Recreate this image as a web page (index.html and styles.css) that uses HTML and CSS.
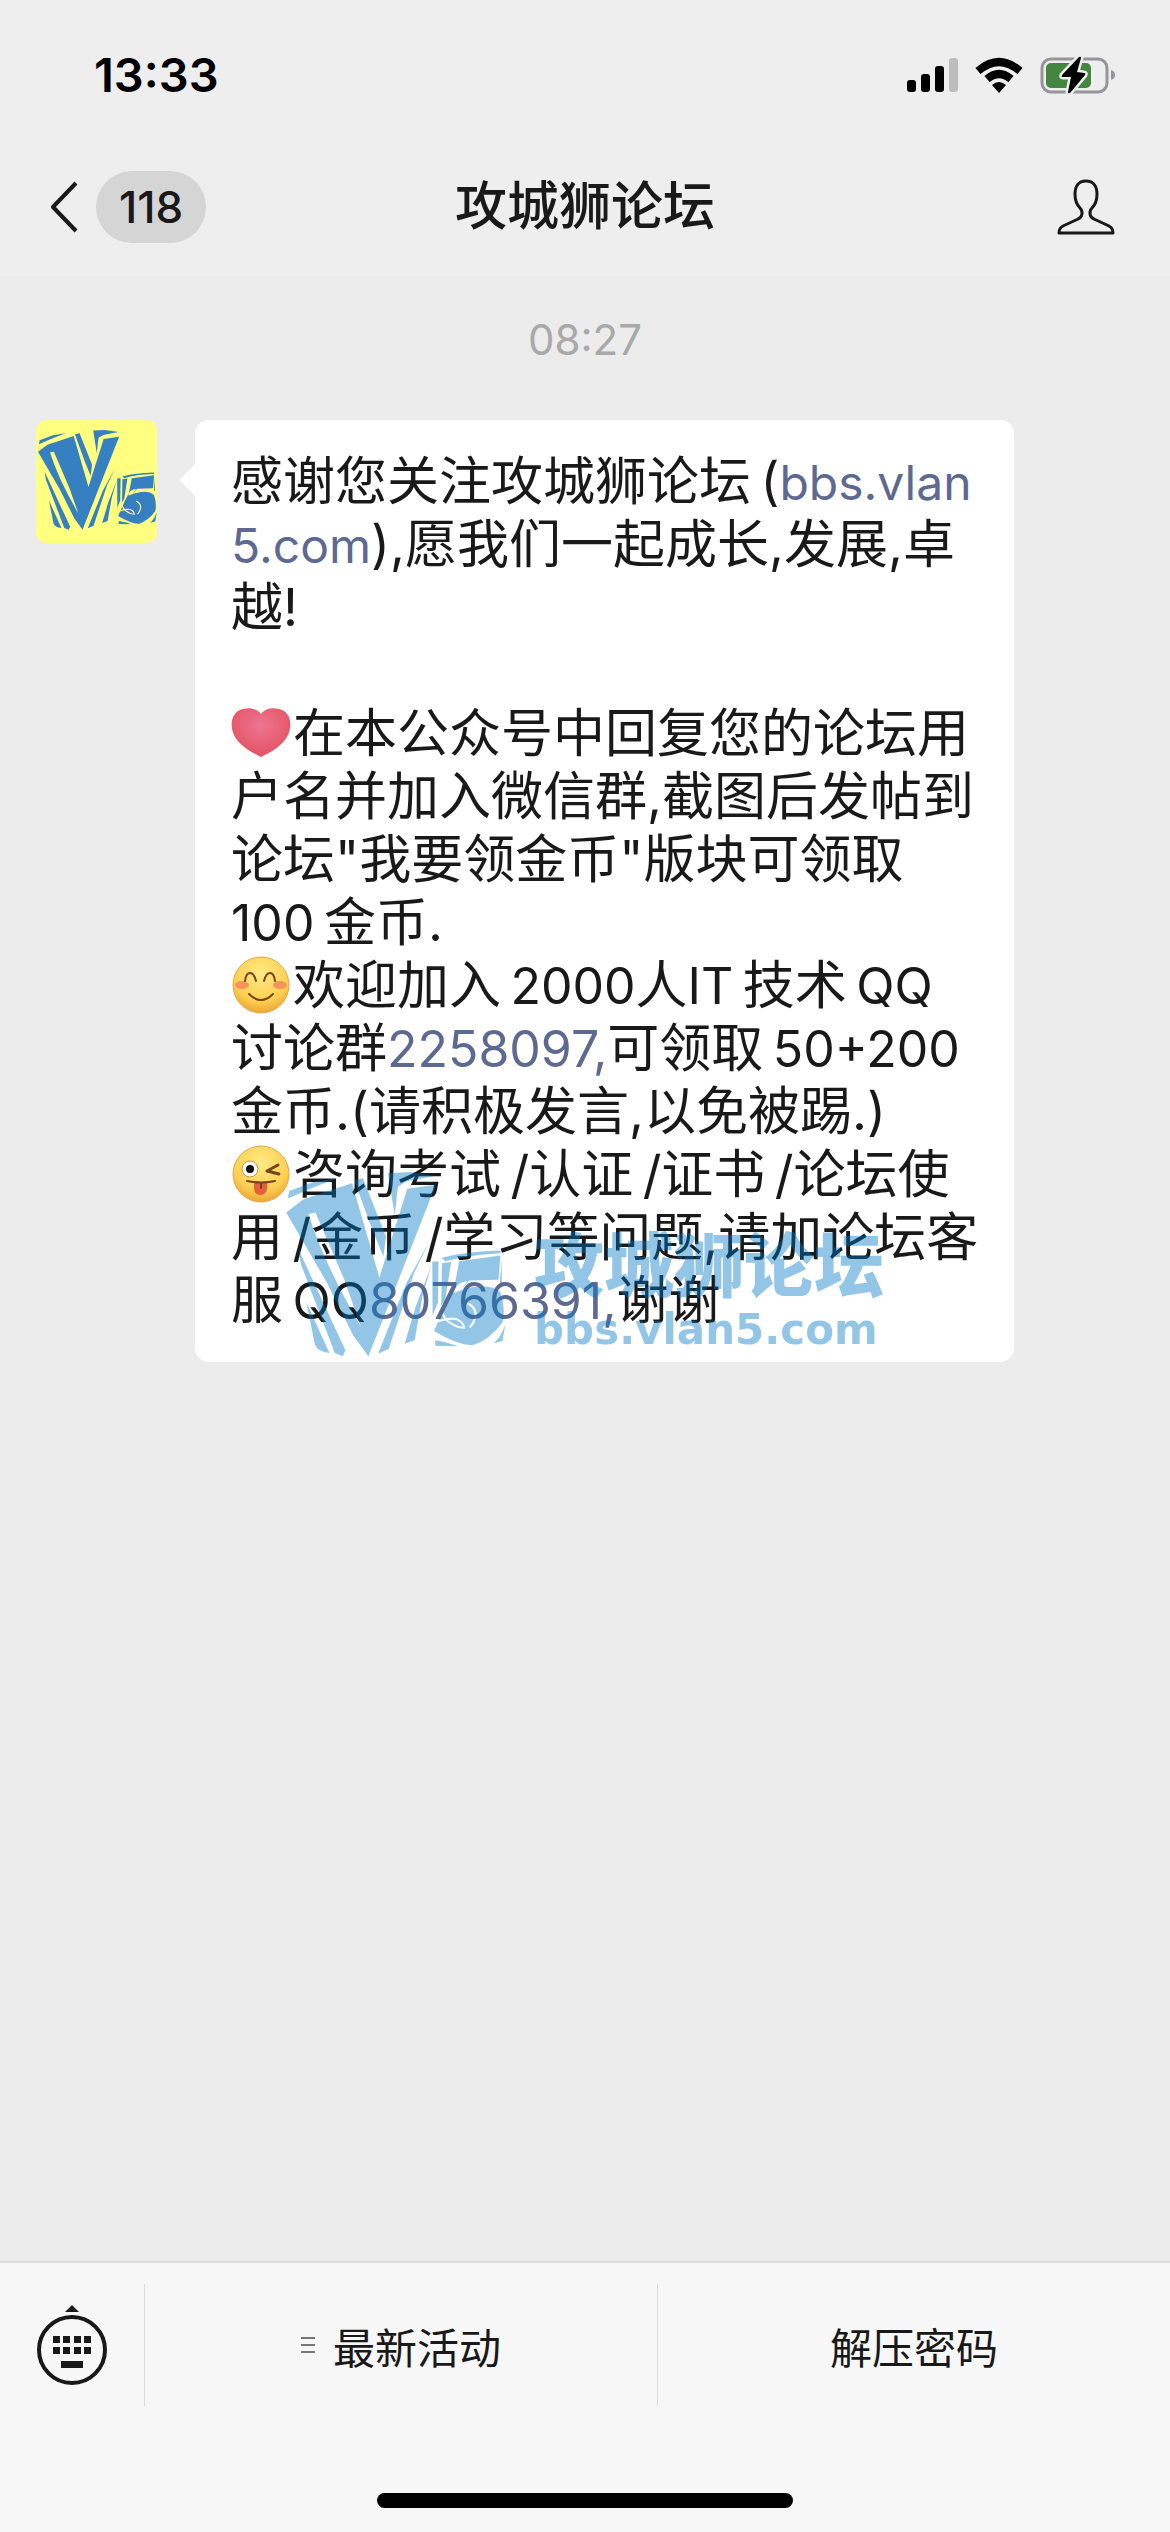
FILE: index.html
```html
<!DOCTYPE html>
<html lang="zh-CN">
  <head>
    <meta charset="UTF-8" />
    <meta name="viewport" content="width=device-width, initial-scale=1.0" />
    <title>攻城狮论坛</title>
    <link rel="stylesheet" href="styles.css">
  </head>
  <body>
    <!-- V5 logo, used by the avatar and the watermark -->
    <svg class="defs" width="0" height="0" aria-hidden="true">
      <defs>
        <mask id="curl" maskUnits="userSpaceOnUse" x="0" y="0" width="800" height="700">
          <rect width="800" height="700" fill="white" />
          <path d="M526 520Q560 505 590 510Q612 520 612 536Q590 536 566 518Q552 506 546 490M622 462Q655 478 645 510Q640 525 630 535" fill="none" stroke="black" stroke-width="6" />
          <path d="M580 424Q590 400 622 396L606 420Q650 400 700 400L716 392L722 404Q650 404 580 432Z" fill="black" />
        </mask>
        <symbol id="v5" viewBox="78 68 660 556">
          <path fill-rule="evenodd" d="M78 190L130 150L276 102L358 385L442 118L528 106L325 622L280 560L200 400ZM145 194Q190 340 302 532L252 390L166 190Z" />
          <path d="M83 148L87 125L160 98L232 87L150 118Z" />
          <path d="M283 94L308 86L378 262L370 322L340 250Z" />
          <path d="M384 72L450 68L524 80L440 96L414 112L404 198Z" />
          <path d="M115 300L256 604L248 622L224 612L122 345Z" />
          <path d="M138 458L208 612Q172 610 164 586Z" />
          <path d="M508 278L462 372L386 600L354 614L440 400Z" />
          <path d="M514 350L488 440L464 574L434 584L468 470Z" />
          <g mask="url(#curl)">
            <path d="M545 326Q620 306 722 304L722 312Q620 318 556 336Z" />
            <path d="M598 336L722 319L716 392L628 394L606 420Q690 398 722 430Q738 480 728 520Q690 572 640 588Q600 592 522 546L556 470L582 420Z" />
            <path d="M517 338L536 336L534 460L518 500Z" />
            <path d="M546 342L574 338L556 452L544 470Z" />
            <path d="M526 574Q560 578 596 592L526 590Z" />
            <path d="M737 524L728 576L702 583Q726 560 737 524Z" />
            <path d="M726 334L726 410L720 398Z" />
          </g>
        </symbol>
      </defs>
    </svg>

    <header class="top">
      <div class="status">
        <span class="clock">13:33</span>
        <div class="status-icons">
          <svg width="51" height="36" viewBox="0 0 51 36">
            <rect x="0" y="23" width="9" height="12" rx="3" />
            <rect x="14" y="17" width="9" height="18" rx="3" />
            <rect x="28" y="9" width="9" height="26" rx="3" />
            <rect x="42" y="1" width="9" height="34" rx="3" fill="#bdbdbd" />
          </svg>
          <svg width="48" height="36" viewBox="0 0 48 36">
            <path d="M3 14Q24 -4 45 14M12 22Q24 12 36 22" fill="none" stroke="#000" stroke-width="8" />
            <path d="M24 36L17 28Q24 22 31 28Z" />
          </svg>
          <svg width="75" height="40" viewBox="0 0 75 40">
            <rect x="2" y="4" width="65" height="33" rx="9" fill="none" stroke="#96969a" stroke-width="3" />
            <rect x="6" y="8" width="45" height="25" rx="5" fill="#43863f" />
            <path d="M71 15Q75 16 75 20Q75 24 71 25Z" fill="#96969a" />
            <path d="M39 2L22 20Q21 22 23 22L31 22L28 37Q28 39 30 38L45 20Q46 18 44 18L37 17L41 3Q41 1 39 2Z" stroke="#eee" stroke-width="5" paint-order="stroke" />
          </svg>
        </div>
      </div>

      <nav class="nav">
        <button class="back" aria-label="返回">
          <svg width="28" height="52" viewBox="0 0 28 52">
            <path d="M26 2L3 26L26 50" fill="none" stroke="#191919" stroke-width="4" stroke-linejoin="round" />
          </svg>
          <span class="unread">118</span>
        </button>
        <h1>攻城狮论坛</h1>
        <button class="profile" aria-label="公众号资料">
          <svg width="58" height="56" viewBox="0 0 58 56">
            <path d="M29 2C21 2 18 8 18 15C18 23 20 26 23 29C26 32 26 38 21 40L6 47Q2 49 2 54L56 54Q56 49 52 47L37 40C32 38 32 32 35 29C38 26 40 23 40 15C40 8 37 2 29 2Z" fill="none" stroke="#191919" stroke-width="3" stroke-linejoin="round" />
          </svg>
        </button>
      </nav>
    </header>

    <main class="chat">
      <time>08:27</time>
      <div class="message">
        <svg class="avatar" viewBox="0 0 121 123">
          <rect width="121" height="123" fill="#ffff80" />
          <use href="#v5" x="2" y="9" width="119" height="102" fill="#3680c2" />
        </svg>
        <div class="bubble">
          <p>感谢您关注攻城狮论坛&thinsp;(<a class="site" href="#">bbs.vlan<br>5.com</a>),愿我们一起成长,发展,卓<br>越!</p>
          <p><svg class="emoji" viewBox="0 0 62 58">
              <defs>
                <radialGradient id="heart" cx="50%" cy="35%" r="65%">
                  <stop offset="0" stop-color="#ee7590" />
                  <stop offset="1" stop-color="#e25262" />
                </radialGradient>
              </defs>
              <path d="M30 10C35 3 46 3 53 7C60 12 61 22 57 31C52 42 38 49 30 53C22 49 8 42 3 31C-1 22 0 12 7 7C14 3 25 3 30 10Z" fill="url(#heart)" />
            </svg>在本公众号中回复您的论坛用<br>户名并加入微信群,截图后发帖到<br>论坛"我要领金币"版块可领取<br><span class="en">100</span>&thinsp;金币.<br><svg class="emoji" viewBox="0 0 62 58">
              <defs>
                <radialGradient id="face" cx="50%" cy="30%" r="70%">
                  <stop offset="0" stop-color="#ffe985" />
                  <stop offset="0.7" stop-color="#fcd052" />
                  <stop offset="1" stop-color="#eca736" />
                </radialGradient>
              </defs>
              <circle cx="30" cy="29" r="28" fill="url(#face)" stroke="#e3a647" stroke-width="1" />
              <ellipse cx="11" cy="29" rx="7" ry="4" fill="#f6935c" />
              <ellipse cx="49" cy="29" rx="7" ry="4" fill="#f6935c" />
              <path d="M14 25Q15 17 19 17Q23 17 25 25M33 25Q35 17 39 17Q43 17 44 25M18 38Q30 50 42 38" fill="none" stroke="#77431a" stroke-width="2" stroke-linecap="round" />
            </svg>欢迎加入&thinsp;<span class="en">2000</span>人<span class="en">IT</span>&thinsp;技术&thinsp;<span class="en">QQ</span><br>讨论群<a href="#">2258097,</a>可领取&thinsp;<span class="en">50+200</span><br>金币.(请积极发言,以免被踢.)<br><svg class="emoji" viewBox="0 0 62 58">
              <circle cx="30" cy="29" r="28" fill="url(#face)" stroke="#e3a647" stroke-width="1" />
              <circle cx="19" cy="24" r="8" fill="#fff" stroke="#c9953e" stroke-width="1" />
              <circle cx="19" cy="24" r="4" fill="#111" />
              <path d="M47 20L36 26L48 29" fill="none" stroke="#77431a" stroke-width="3" stroke-linejoin="round" stroke-linecap="round" />
              <path d="M23 37L36 37L36 44Q35 50 29 50Q24 50 23 44Z" fill="#e2603c" />
              <path d="M16 36Q30 39 44 36M30 38L30 43" fill="none" stroke="#77431a" stroke-width="2" stroke-linecap="round" />
            </svg>咨询考试&thinsp;/认证&thinsp;/证书&thinsp;/论坛使<br>用&thinsp;/金币&thinsp;/学习等问题,请加论坛客<br>服&thinsp;<span class="en">QQ</span><a href="#">80766391,</a>谢谢</p>

          <div class="watermark">
            <svg viewBox="0 0 220 185"><use href="#v5" width="220" height="185" /></svg>
            <div>
              <strong>攻城狮论坛</strong>
              <span>bbs.vlan5.com</span>
            </div>
          </div>
        </div>
      </div>
    </main>

    <footer class="bottom">
      <div class="menu">
        <button class="keyboard" aria-label="切换键盘">
          <svg width="72" height="82" viewBox="0 0 72 82">
            <circle cx="36" cy="46" r="33" fill="none" stroke="#191919" stroke-width="4" />
            <path d="M29 8L36 1L43 8ZM17 32h7v7h-7zM27 32h7v7h-7zM38 32h7v7h-7zM48 32h7v7h-7zM17 43h7v7h-7zM27 43h7v7h-7zM38 43h7v7h-7zM48 43h7v7h-7zM25 57h22v7h-22z" fill="#191919" />
          </svg>
        </button>
        <button class="item">
          <svg width="14" height="16" viewBox="0 0 14 16">
            <path d="M0 1h14M0 8h14M0 15h14" stroke="#777" stroke-width="2" />
          </svg>
          最新活动
        </button>
        <button class="item">解压密码</button>
      </div>
      <div class="home-bar"></div>
    </footer>
  </body>
</html>
```
FILE: styles.css
```css
* {
  box-sizing: border-box;
}

body {
  margin: 0;
  min-height: 100vh;
  display: flex;
  flex-direction: column;
  font-family: Inter, "Noto Sans CJK SC", sans-serif;
  color: #191919;
  background-color: #ececec;
}

svg {
  display: block;
  flex: none;
}

button {
  margin: 0;
  padding: 0;
  border: 0;
  background: none;
  color: inherit;
  font: inherit;
  cursor: pointer;
}

a {
  color: #5d6990;
  text-decoration: none;
}

.defs {
  position: absolute;
}

.top {
  background-color: #eee;
}

.status {
  display: flex;
  justify-content: space-between;
  align-items: center;
  padding: 47px 55px 35px 94px;
  line-height: 56px;
}

.clock {
  color: #000;
  font-size: 47px;
  font-weight: 600;
}

.status-icons {
  display: flex;
  align-items: center;
  gap: 17px;
}

.nav {
  display: grid;
  grid-template-columns: 1fr auto 1fr;
  align-items: center;
  height: 138px;
  padding: 0 50px;
}

.nav h1 {
  margin: 0;
  font-size: 52px;
  font-weight: 500;
  line-height: 72px;
}

.back {
  display: flex;
  align-items: center;
  gap: 18px;
  justify-self: start;
}

.unread {
  padding: 0 23px;
  border-radius: 36px;
  background-color: #d5d5d5;
  font-size: 44px;
  font-weight: 500;
  line-height: 72px;
}

.profile {
  justify-self: end;
  padding-right: 5px;
}

.chat {
  flex: 1;
  padding: 40px 36px;
}

time {
  display: block;
  margin-bottom: 56px;
  text-align: center;
  font-size: 42px;
  line-height: 48px;
  color: #a9a9a9;
}

.message {
  display: flex;
  align-items: flex-start;
  gap: 38px;
}

.avatar {
  width: 121px;
  height: 123px;
  border-radius: 10px;
}

.bubble {
  position: relative;
  flex: 1;
  margin-right: 123px;
  padding: 30px 36px;
  border-radius: 14px;
  background-color: #fff;
}

.bubble::before {
  content: "";
  position: absolute;
  left: -16px;
  top: 43px;
  border: 17px solid transparent;
  border-left: 0;
  border-right-color: #fff;
}

.bubble p {
  margin: 0;
  font-size: 52px;
  line-height: 63px;
  white-space: nowrap;
}

.bubble p + p {
  margin-top: 63px;
}

.bubble a,
.en {
  font-size: 50px;
  line-height: 48px;
}

.bubble .site {
  font-size: 48px;
}

.emoji {
  display: inline-block;
  width: 62px;
  height: 58px;
  vertical-align: -10px;
}

.watermark {
  position: absolute;
  left: 91px;
  bottom: 5px;
  display: flex;
  align-items: flex-end;
  gap: 28px;
  color: #007ac6;
  opacity: 0.42;
  pointer-events: none;
}

.watermark svg {
  width: 220px;
  height: 185px;
  fill: #007ac6;
}

.watermark strong,
.watermark span {
  display: block;
}

.watermark strong {
  font-weight: 900;
  font-size: 70px;
  line-height: 72px;
}

.watermark span {
  font-family: "DejaVu Sans", sans-serif;
  font-weight: 700;
  font-size: 42px;
  line-height: 54px;
}

.bottom {
  border-top: 2px solid #dcdcdc;
  background-color: #f7f7f7;
}

.menu {
  display: flex;
  align-items: center;
  height: 164px;
}

.keyboard {
  width: 144px;
  padding: 0 36px;
}

.item {
  flex: 1;
  display: flex;
  justify-content: center;
  align-items: center;
  gap: 18px;
  height: 122px;
  border-left: 1px solid #dcdcdc;
  font-size: 42px;
}

.home-bar {
  width: 416px;
  height: 15px;
  margin: 66px auto 24px;
  border-radius: 8px;
  background-color: #000;
}
```
